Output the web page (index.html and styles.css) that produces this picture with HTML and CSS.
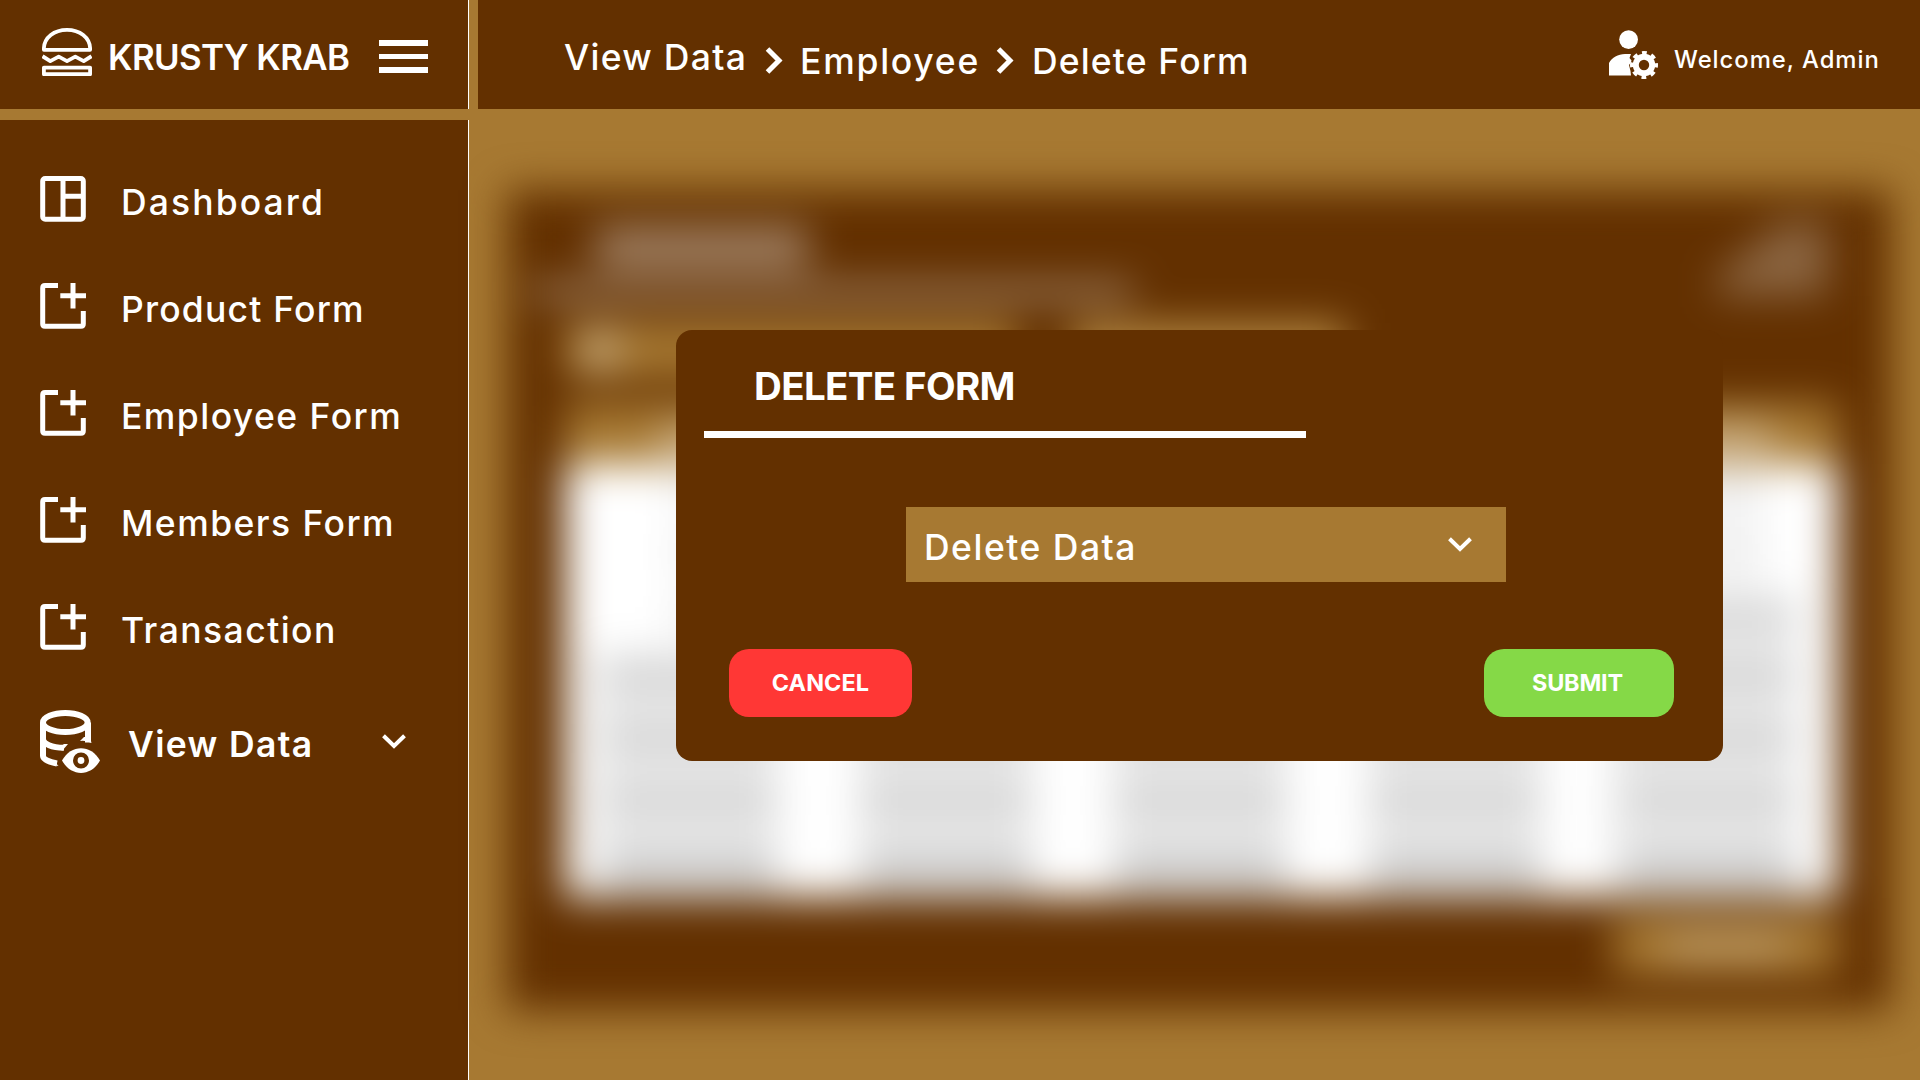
FILE: index.html
```html
<!DOCTYPE html>
<html lang="en">
<head>
<meta charset="utf-8">
<title>Krusty Krab Admin</title>
<link rel="stylesheet" href="styles.css">
</head>
<body>
<svg class="defs" width="0" height="0" aria-hidden="true">
  <symbol id="add-form" viewBox="0 0 46 46">
    <path d="M18 2.5H5Q2.7 2.5 2.7 5V41Q2.7 43.3 5 43.3H41Q43.3 43.3 43.3 41V28M33 0V25.5M20.3 12.8H46" fill="none" stroke="#fff" stroke-width="5"/>
  </symbol>
</svg>
<div class="app">
  <div class="brand">
    <svg width="50" height="48" viewBox="0 0 50 48" fill="none" stroke="#fff" stroke-width="3.8" stroke-linejoin="round">
      <path d="M1.9 21.8V20C2.5 9.5 12 1.9 25 1.9S47.5 9.5 48.1 20V21.8Z"/>
      <path d="M.5 28.2L8.3 33.2L16.7 28.7L25 33.2L33.3 28.7L41.7 33.2L49.5 28.2"/>
      <rect x="1.9" y="39.6" width="46.2" height="6.6"/>
    </svg>
    <span class="brand-name">KRUSTY KRAB</span>
    <span class="burger"><i></i><i></i><i></i></span>
  </div>

  <header class="topbar">
    <nav class="crumbs">
      <span class="crumb first">View Data</span>
      <svg width="18" height="27" viewBox="0 0 18 27"><path d="M2.5 2L14 13.5L2.5 25" fill="none" stroke="#fff" stroke-width="5"/></svg>
      <span class="crumb employee">Employee</span>
      <svg width="18" height="27" viewBox="0 0 18 27"><path d="M2.5 2L14 13.5L2.5 25" fill="none" stroke="#fff" stroke-width="5"/></svg>
      <span class="crumb">Delete Form</span>
    </nav>
    <div class="user">
      <svg width="50" height="50" viewBox="0 0 50 50">
        <circle cx="19.6" cy="9.6" r="9.4" fill="#fff"/>
        <path d="M0 45.5V33C3 27.5 9 24 16 24H22L20.5 28L23 31L20 35L21.5 41L22 45.5Z" fill="#fff"/>
        <circle cx="35" cy="35" r="13.2" fill="#633000"/>
        <circle cx="35" cy="35" r="8.2" fill="none" stroke="#fff" stroke-width="6"/>
        <circle cx="35" cy="35" r="12" fill="none" stroke="#fff" stroke-width="4" stroke-dasharray="4.7 4.725" stroke-dashoffset="2.35"/>
      </svg>
      <span>Welcome, Admin</span>
    </div>
  </header>

  <nav class="sidebar">
    <a class="item">
      <svg width="46" height="46" viewBox="0 0 46 46" fill="none" stroke="#fff" stroke-width="5"><rect x="2.7" y="2.5" width="40.6" height="40.8" rx="2.5"/><path d="M23 3V43M23 20.3H43"/></svg>
      <span class="t-dashboard">Dashboard</span>
    </a>
    <a class="item"><svg width="46" height="46"><use href="#add-form"/></svg><span class="t-product">Product Form</span></a>
    <a class="item"><svg width="46" height="46"><use href="#add-form"/></svg><span>Employee Form</span></a>
    <a class="item"><svg width="46" height="46"><use href="#add-form"/></svg><span>Members Form</span></a>
    <a class="item"><svg width="46" height="46"><use href="#add-form"/></svg><span>Transaction</span></a>
    <a class="item active">
      <svg width="60" height="63" viewBox="0 0 60 63">
        <g fill="none" stroke="#fff" stroke-width="6">
          <ellipse cx="25.3" cy="12.5" rx="22.3" ry="9.5"/>
          <path d="M3 12.5V46C3 49.5 9 52 17 53.5M48 12.5V32.5M3 29C3 34 12 37.5 24 37.8"/>
        </g>
        <path d="M16 49.5L15.5 52.5L18.5 56L13 55Z" fill="#fff"/>
        <path d="M22 41L28 34H24L20 37Z" fill="#fff"/>
        <path d="M40 31Q45 30 51.5 33L50 27H44Z" fill="#fff"/>
        <path d="M22 50.5C31 34 51 34 60 50.5C51 67 31 67 22 50.5Z" fill="#fff"/>
        <circle cx="41" cy="50.5" r="5.7" fill="none" stroke="#633000" stroke-width="4.6"/>
      </svg>
      <span>View Data</span>
      <svg class="chev" width="24" height="15" viewBox="0 0 24 15"><path d="M1.5 1.8L12 12L22.5 1.8" fill="none" stroke="#fff" stroke-width="4"/></svg>
    </a>
  </nav>

  <main class="content">
    <section class="card" aria-hidden="true">
      <div class="card-head">
        <div class="ghost-title"></div>
        <svg class="ghost-logo" width="130" height="84" viewBox="0 0 130 84"><path d="M6 80V62L52 22L72 6H118V80Z" fill="#fff" fill-opacity=".25"/></svg>
      </div>
      <div class="ghost-rule"></div>
      <div class="tools"><div class="search"><i></i></div><div class="tool"></div></div>
      <div class="table">
        <div class="thead"><i></i><i></i><i></i><i></i><i></i></div>
        <div class="tr light"><i></i><i></i><i></i><i></i><i></i></div>
        <div class="tr light"><i></i><i></i><i></i><i></i><i></i></div>
        <div class="tr light third"><i></i><i></i><i></i><i></i><i></i></div>
        <div class="tr"><i></i><i></i><i></i><i></i><i></i></div>
        <div class="tr"><i></i><i></i><i></i><i></i><i></i></div>
        <div class="tr"><i></i><i></i><i></i><i></i><i></i></div>
        <div class="tr last"><i></i><i></i><i></i><i></i><i></i></div>
      </div>
      <div class="pager"><i></i></div>
    </section>

    <section class="modal">
      <h1>DELETE FORM</h1>
      <div class="rule"></div>
      <div class="select">
        <span>Delete Data</span>
        <svg width="24" height="15" viewBox="0 0 24 15"><path d="M1.5 1.8L12 12L22.5 1.8" fill="none" stroke="#fff" stroke-width="4"/></svg>
      </div>
      <div class="actions">
        <button class="cancel">CANCEL</button>
        <button class="submit">SUBMIT</button>
      </div>
    </section>
  </main>
</div>
</body>
</html>
```
FILE: styles.css
```css
* { box-sizing: border-box; }

body {
  margin: 0;
  width: 1920px;
  height: 1080px;
  overflow: hidden;
  background: #a77932;
  color: #fff;
  font-family: Inter, "Open Sans", sans-serif;
  font-size: 35.5px;
  font-weight: 500;
  line-height: 40px;
  white-space: nowrap;
}

.defs { display: block; }
svg { flex: none; }

.app {
  display: grid;
  grid-template-columns: 469px 1451px;
  grid-template-rows: 109px 960px;
  row-gap: 11px;
}

/* Top row */
.brand {
  display: flex;
  align-items: flex-start;
  padding: 28px 40px 0 42px;
  background: #633000;
  border-right: 1px solid #fff;
}
.brand-name {
  margin: 9px 0 0 16px;
  font-size: 34.8px;
  font-weight: 600;
  letter-spacing: -.59px;
}
.burger {
  display: flex;
  flex-direction: column;
  gap: 8px;
  width: 49px;
  margin: 12px 0 0 auto;
}
.burger i { height: 5.6px; background: #fff; }

.topbar {
  display: flex;
  justify-content: space-between;
  margin-left: 9px;
  background: #633000;
}
.crumbs {
  display: grid;
  grid-template-columns: 200px 18px 213px 18px auto;
  align-items: start;
  padding: 42px 0 0 87px;
}
.crumbs svg { margin-top: 5px; }
.crumb { padding-left: 18px; letter-spacing: 1.15px; }
.crumb.first { margin: -4px 0 0 -1px; padding-left: 0; letter-spacing: 1.3px; }
.crumb.employee { padding-left: 17px; letter-spacing: 1.75px; }

.user {
  display: flex;
  gap: 15px;
  width: 311px;
  padding-top: 30px;
  font-size: 23.8px;
  letter-spacing: .98px;
}
.user span { margin-top: 10px; }

/* Sidebar */
.sidebar {
  padding: 25.5px 0 0 40px;
  background: #633000;
  border-right: 1px solid #fff;
}
.item {
  display: flex;
  align-items: center;
  gap: 35px;
  height: 107px;
  letter-spacing: 1.45px;
}
.item span { padding-top: 7px; }
.t-dashboard { letter-spacing: 2.1px; }
.t-product { letter-spacing: 1.2px; }
.item.active {
  height: 122px;
  gap: 28px;
  font-weight: 600;
  letter-spacing: 1.35px;
}
.item .chev { margin: 0 62px 0 auto; }

/* Content */
.content { position: relative; padding: 70px 29px 0 38px; }

.card {
  height: 820px;
  padding: 26px 53px 0 58px;
  background: #633000;
  filter: blur(20px);
}
.card-head { display: flex; justify-content: space-between; height: 72px; }
.ghost-title {
  width: 212px;
  height: 38px;
  margin: 12px 0 0 31px;
  background: rgba(255, 255, 255, .42);
}
.ghost-logo { margin-right: -2px; }
.ghost-rule {
  width: 600px;
  height: 7px;
  margin-left: -32px;
  background: #fff;
}
.tools { display: flex; gap: 54px; margin-top: 28px; }
.search { width: 452px; height: 54px; padding: 6px 14px; background: #a77932; }
.search i { display: block; width: 42px; height: 42px; border-radius: 50%; background: rgba(255, 255, 255, .38); }
.tool { width: 275px; height: 54px; background: #b0843f; }

.table { margin-top: 26px; background: #fff; }
.thead { height: 61px; background: #a77932; }
.thead, .tr { display: grid; grid-template-columns: repeat(5, 1fr); }
.thead i { width: 130px; height: 28px; margin: 22px 0 0 95px; background: rgba(255, 255, 255, .42); }
.thead i:last-child { margin-left: 60px; }
.tr { height: 62px; }
.tr i {
  width: 172px;
  margin-left: 40px;
  background: linear-gradient(#e9e9e9 0 19px, #c2c2c2 19px 34px, #e9e9e9 34px);
}
.tr i:first-child, .tr i:last-child { box-shadow: -14px 0 0 #eee; }
.tr.light i { width: 100px; margin-left: 110px; background: linear-gradient(#f8f8f8 0 18px, #e0e0e0 18px 34px, #f8f8f8 34px); box-shadow: none; }
.tr.light i:last-child { width: 120px; margin-left: 60px; background: linear-gradient(#f4f4f4 0 18px, #ececec 18px 34px, #f4f4f4 34px); }
.tr.third i:last-child { width: 172px; margin-left: 40px; background: linear-gradient(#f2f2f2 0 19px, #c2c2c2 19px 34px, #e9e9e9 34px); }
.tr.last i { background: linear-gradient(#e9e9e9 0 19px, #c2c2c2 19px 38px, #dedede 38px); }
.pager {
  display: flex;
  align-items: center;
  justify-content: center;
  width: 224px;
  height: 56px;
  margin: 20px 0 0 auto;
  background: #a77932;
}
.pager i { width: 124px; height: 24px; background: rgba(255, 255, 255, .3); }

/* Delete dialog */
.modal {
  position: absolute;
  left: 207px;
  top: 210px;
  width: 1047px;
  height: 431px;
  padding: 36px 49px 0 28px;
  border-radius: 16px;
  background: #633000;
}
.modal h1 {
  margin: 0 0 25px 50px;
  font-size: 38.5px;
  font-weight: 700;
  line-height: 40px;
  letter-spacing: -.65px;
}
.rule { width: 602px; height: 7px; background: #fff; }
.select {
  display: flex;
  align-items: center;
  justify-content: space-between;
  width: 600px;
  height: 75px;
  margin: 69px 0 0 202px;
  padding: 0 34px 0 18px;
  background: #a77932;
  letter-spacing: 1.5px;
}
.select span { padding-top: 7px; }
.actions { display: flex; justify-content: space-between; margin: 67px 0 0 25px; }
button {
  height: 68px;
  padding: 0;
  border: 0;
  border-radius: 20px;
  color: #fff;
  font: 700 23.4px/68px Inter, "Open Sans", sans-serif;
}
.cancel { width: 183px; background: #ff3735; letter-spacing: .1px; }
.submit { width: 190px; padding-right: 3px; background: #85d947; letter-spacing: -.14px; }
```
